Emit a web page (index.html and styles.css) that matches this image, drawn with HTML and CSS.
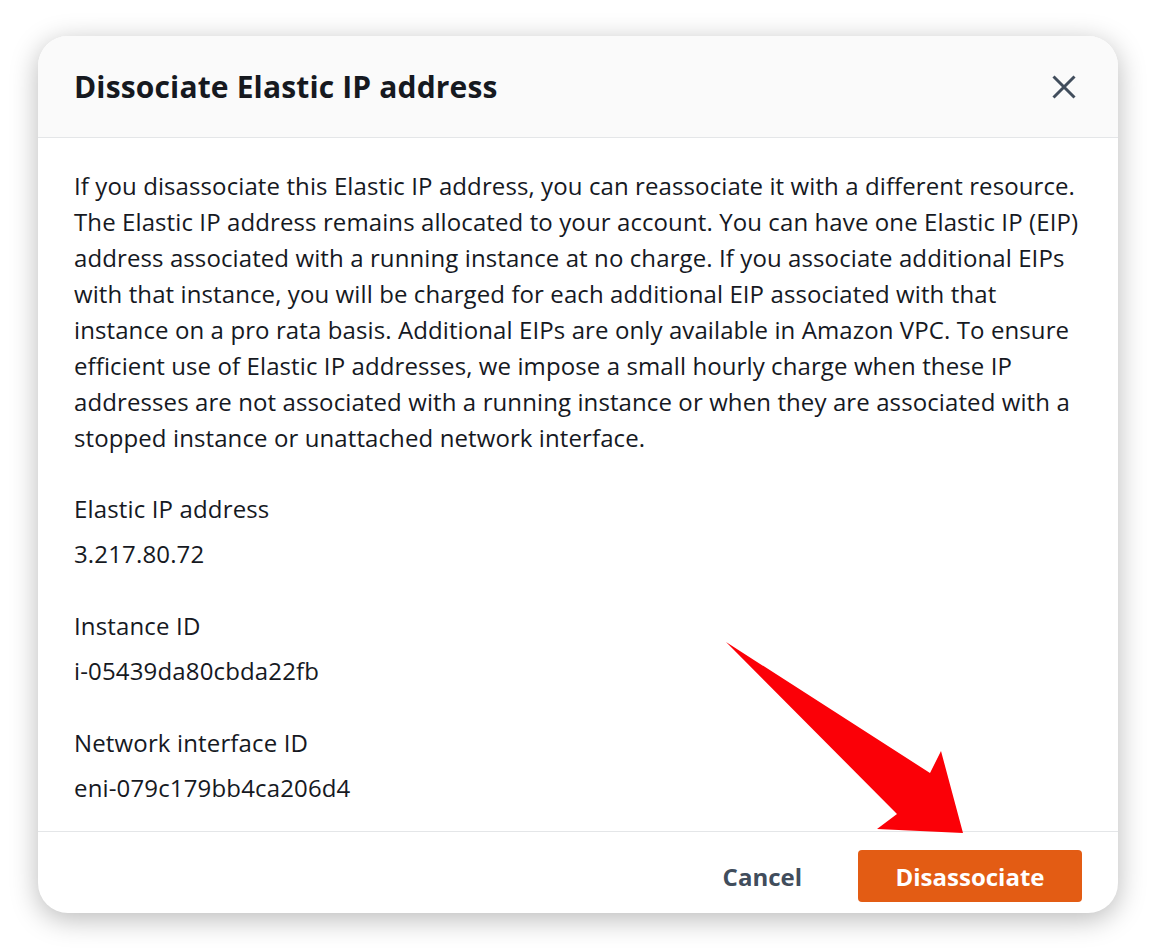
FILE: index.html
```html
<!DOCTYPE html>
<html lang="en">
<head>
<meta charset="utf-8">
<title>Dissociate Elastic IP address</title>
<link rel="stylesheet" href="styles.css">
</head>
<body>
<div class="modal">
  <header class="modal-header">
    <h1 class="modal-title">Dissociate Elastic IP address</h1>
    <button class="close" aria-label="Close">
      <svg width="24" height="24" viewBox="0 0 24 24"><path d="M1.5 1.5 L22.5 22.5 M22.5 1.5 L1.5 22.5" stroke="#414d5c" stroke-width="3" fill="none"/></svg>
    </button>
  </header>
  <section class="modal-body">
    <p class="desc">If you disassociate this Elastic IP address, you can reassociate it with a different resource. The Elastic IP address remains allocated to your account. You can have one Elastic IP (EIP) address associated with a running instance at no charge. If you associate additional EIPs with that instance, you will be charged for each additional EIP associated with that instance on a pro rata basis. Additional EIPs are only available in Amazon VPC. To ensure efficient use of Elastic IP addresses, we impose a small hourly charge when these IP addresses are not associated with a running instance or when they are associated with a stopped instance or unattached network interface.</p>
    <dl class="fields">
      <div class="field"><dt>Elastic IP address</dt><dd>3.217.80.72</dd></div>
      <div class="field"><dt>Instance ID</dt><dd>i-05439da80cbda22fb</dd></div>
      <div class="field"><dt>Network interface ID</dt><dd>eni-079c179bb4ca206d4</dd></div>
    </dl>
  </section>
  <footer class="modal-footer">
    <button class="btn-link">Cancel</button>
    <button class="btn-primary">Disassociate</button>
  </footer>
  <svg class="arrow" width="1156" height="950" viewBox="0 0 1156 950"><polygon points="726,642 930,773 941,751 963,833 877,829 897,814" fill="#fb0007"/></svg>
</div>
</body>
</html>
```
FILE: styles.css
```css
* { box-sizing: border-box; }
html, body { margin: 0; padding: 0; background: #ffffff; }
body {
  font-family: "Open Sans", "Noto Sans", sans-serif;
  color: #16191f;
  padding: 36px 38px;
  width: 1156px;
  height: 950px;
}
.modal {
  width: 1080px;
  height: 877px;
  background: #fff;
  border-radius: 30px;
  box-shadow: 0 6px 28px rgba(0,0,0,0.28);
  overflow: hidden;
  display: flex;
  flex-direction: column;
}
.modal-header {
  height: 102px;
  background: #fafafa;
  border-bottom: 1px solid #e4e6e8;
  display: flex;
  align-items: center;
  justify-content: space-between;
  padding: 0 42px 0 36px;
  flex-shrink: 0;
}
.modal-title {
  margin: 0;
  font-size: 30px;
  font-weight: 700;
  letter-spacing: 0.15px;
}
.close {
  background: none;
  border: 0;
  padding: 0;
  width: 24px;
  height: 24px;
  display: flex;
}
.modal-body {
  flex: 1;
  min-height: 0;
  padding: 30px 36px 0 36px;
}
.desc {
  margin: 0;
  font-size: 24px;
  line-height: 36px;
  letter-spacing: 0.1px;
}
.fields { margin: 30px 0 0; }
.field + .field { margin-top: 27px; }
.field dt, .field dd {
  margin: 0;
  font-size: 24px;
  line-height: 45px;
  letter-spacing: 0.15px;
}
.modal-footer {
  flex-shrink: 0;
  border-top: 1px solid #e4e6e8;
  padding: 18px 36px 11px;
  display: flex;
  justify-content: flex-end;
  align-items: center;
  gap: 56px;
}
.btn-link {
  background: none;
  border: 0;
  font: inherit;
  font-size: 24px;
  font-weight: 700;
  color: #414d5c;
  padding: 0;
}
.btn-primary {
  font: inherit;
  font-size: 24px;
  font-weight: 700;
  color: #fff;
  background: #e35c14;
  border: 0;
  border-radius: 4px;
  width: 224px;
  height: 52px;
}
.arrow {
  position: absolute;
  left: 0;
  top: 0;
  pointer-events: none;
}
```
